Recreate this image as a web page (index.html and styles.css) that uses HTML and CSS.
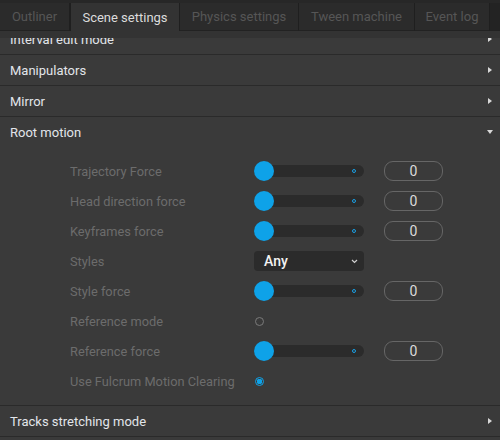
FILE: index.html
```html
<!DOCTYPE html>
<html>
<head>
<meta charset="utf-8">
<link rel="stylesheet" href="styles.css">
</head>
<body>
<div class="app">
  <div class="tabbar">
    <div class="tab w1">Outliner</div>
    <div class="tab active w2">Scene settings</div>
    <div class="tab w3">Physics settings</div>
    <div class="tab w4">Tween machine</div>
    <div class="tab w5">Event log</div>
    <div class="tab-rest"></div>
  </div>
  <div class="scroll">
    <div class="strip"></div>
    <div class="list">
      <div class="section first">
        <div class="header"><span>Interval edit mode</span><span class="arrow right"></span></div>
      </div>
      <div class="section">
        <div class="header"><span>Manipulators</span><span class="arrow right"></span></div>
      </div>
      <div class="section">
        <div class="header"><span>Mirror</span><span class="arrow right"></span></div>
      </div>
      <div class="section">
        <div class="header"><span>Root motion</span><span class="arrow down"></span></div>
        <div class="body">
          <div class="row"><div class="label">Trajectory Force</div><div class="slider"><span class="thumb"></span><span class="ring"></span></div><div class="num">0</div></div>
          <div class="row"><div class="label">Head direction force</div><div class="slider"><span class="thumb"></span><span class="ring"></span></div><div class="num">0</div></div>
          <div class="row"><div class="label">Keyframes force</div><div class="slider"><span class="thumb"></span><span class="ring"></span></div><div class="num">0</div></div>
          <div class="row"><div class="label">Styles</div><div class="select"><span>Any</span><svg class="chev" width="7" height="5" viewBox="0 0 7 5"><path d="M1 1 L3.5 3.5 L6 1" fill="none" stroke="#d0d0d0" stroke-width="1.2"/></svg></div></div>
          <div class="row"><div class="label">Style force</div><div class="slider"><span class="thumb"></span><span class="ring"></span></div><div class="num">0</div></div>
          <div class="row"><div class="label">Reference mode</div><span class="radio"></span></div>
          <div class="row"><div class="label">Reference force</div><div class="slider"><span class="thumb"></span><span class="ring"></span></div><div class="num">0</div></div>
          <div class="row"><div class="label">Use Fulcrum Motion Clearing</div><span class="radio checked"></span></div>
        </div>
      </div>
      <div class="section">
        <div class="header"><span>Tracks stretching mode</span><span class="arrow right"></span></div>
      </div>
    </div>
  </div>
</div>
</body>
</html>
```
FILE: styles.css
```css
* { box-sizing: border-box; }
html, body { margin: 0; padding: 0; }
body {
  width: 500px;
  height: 440px;
  overflow: hidden;
  background: #3a3a3a;
  font-family: Roboto, "Liberation Sans", sans-serif;
  font-size: 13px;
}
.app { width: 500px; height: 440px; display: flex; flex-direction: column; }
.tabbar {
  height: 31px;
  flex: none;
  display: flex;
  background: #2b2b2b;
  border-top: 3px solid #272727;
}
.tab {
  display: flex;
  align-items: center;
  justify-content: center;
  color: #565656;
  background: #2b2b2b;
  border-right: 1px solid #1f1f1f;
  border-bottom: 1px solid #222;
}
.tab.active {
  background: #333333;
  color: #dcdcdc;
  border-left: 1px solid #1f1f1f;
  border-bottom: none;
}
.w1 { width: 70px; }
.w2 { width: 110px; }
.w3 { width: 119px; }
.w4 { width: 116px; }
.w5 { width: 75px; }
.tab-rest { flex: 1; background: #232323; border-bottom: 1px solid #222; }
.scroll { flex: 1; position: relative; overflow: hidden; }
.strip {
  position: absolute;
  left: 0; right: 0; top: 0;
  height: 7px;
  background: #333333;
  z-index: 2;
}
.list { margin-top: -7px; }
.section { border-bottom: 1px solid #2a2a2a; }
.header {
  height: 30px;
  display: flex;
  align-items: center;
  justify-content: space-between;
  padding: 0 8px 0 10px;
  color: #e2e5ea;
  font-weight: 400;
}
.arrow { width: 0; height: 0; }
.arrow.right {
  border-top: 3px solid transparent;
  border-bottom: 3px solid transparent;
  border-left: 4px solid #d8d8d8;
  margin-right: 0;
}
.arrow.down {
  border-left: 3.5px solid transparent;
  border-right: 3.5px solid transparent;
  border-top: 4px solid #d8d8d8;
  margin-right: -1px;
}
.body { padding: 9px 0 9px 70px; }
.row { height: 30px; display: flex; align-items: center; }
.label { width: 184px; color: #6c6c6c; font-size: 12.8px; }
.slider {
  position: relative;
  width: 110px;
  height: 12px;
  background: #2b2b2b;
  border-radius: 6px;
}
.thumb {
  position: absolute;
  left: 0; top: -4px;
  width: 20px; height: 20px;
  border-radius: 50%;
  background: #0ea2e8;
}
.ring {
  position: absolute;
  left: 98px; top: 4px;
  width: 4px; height: 4px;
  border-radius: 50%;
  border: 1px solid #1a9fe4;
}
.num {
  margin-left: 20px;
  width: 59px;
  height: 20px;
  border: 1px solid #666;
  border-radius: 9px;
  display: flex;
  align-items: center;
  justify-content: center;
  color: #dadada;
  font-size: 14px;
}
.select {
  width: 110px;
  height: 20px;
  background: #2b2b2b;
  border-radius: 4px;
  display: flex;
  align-items: center;
  justify-content: space-between;
  padding: 0 6px 0 10px;
  color: #f2f2f2;
  font-weight: 500;
  font-size: 14px;
}
.chev { margin-top: 1px; }
.radio {
  margin-left: 1px;
  width: 9px; height: 9px;
  border-radius: 50%;
  border: 1px solid #7a7a7a;
}
.radio.checked {
  border: 1px solid #0ea2e8;
  background: radial-gradient(circle, #0ea2e8 0 2.6px, #3a3a3a 3px);
}
```
